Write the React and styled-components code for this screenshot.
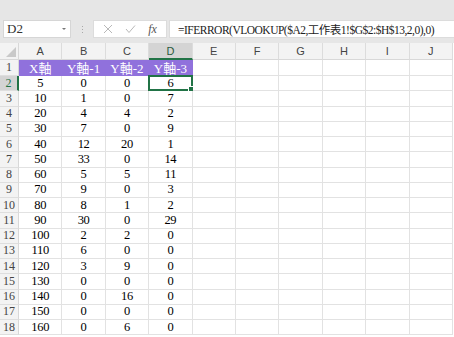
import React from "react";
import styled, { createGlobalStyle } from "styled-components";

const GlobalStyle = createGlobalStyle`
  html, body {
    margin: 0;
    padding: 0;
    background: #e6e6e6;
  }
`;

const Window = styled.div`
  width: 454px;
  height: 337px;
  overflow: hidden;
  background: #e6e6e6;
  display: flex;
  flex-direction: column;
`;

const TopStrip = styled.div`
  height: 20px;
  flex: none;
`;

const FormulaBar = styled.div`
  height: 18px;
  flex: none;
  display: flex;
  align-items: stretch;
  padding-left: 3px;
`;

const NameBox = styled.div`
  width: 68px;
  box-sizing: border-box;
  background: #fff;
  border: 1px solid #d6d6d6;
  display: flex;
  align-items: center;
  justify-content: space-between;
  padding: 0 4px 0 3px;
  font-family: "Liberation Serif", serif;
  font-size: 13px;
  color: #333;
`;

const Caret = styled.span`
  width: 0;
  height: 0;
  border-left: 2px solid transparent;
  border-right: 2px solid transparent;
  border-top: 2px solid #777;
`;

const Grip = styled.div`
  width: 22px;
  display: flex;
  flex-direction: column;
  align-items: center;
  justify-content: center;
  gap: 2px;
  span {
    width: 1px;
    height: 1px;
    background: #a8a8a8;
  }
`;

const FxGroup = styled.div`
  width: 74px;
  box-sizing: border-box;
  background: #fff;
  border: 1px solid #dcdcdc;
  display: flex;
  align-items: center;
  justify-content: space-around;
  padding: 0 3px;
`;

const FxLabel = styled.span`
  font-family: "Liberation Serif", serif;
  font-style: italic;
  font-size: 12px;
  color: #555;
`;

const FormulaInput = styled.div`
  flex: 1;
  margin-left: 2px;
  box-sizing: border-box;
  background: #fff;
  border: 1px solid #dcdcdc;
  border-right: none;
  display: flex;
  align-items: center;
  padding-left: 8px;
  white-space: nowrap;
  overflow: hidden;
  font-family: "Liberation Serif", "Noto Sans CJK TC", serif;
  font-size: 11.5px;
  letter-spacing: -0.5px;
  color: #222;
`;

const Sheet = styled.div`
  margin-top: 5px;
  flex: 1;
  display: grid;
  grid-template-columns: 19px repeat(10, 43.4px);
  grid-template-rows: 17px 16px repeat(17, 15.25px);
  background: #fff;
`;

const Corner = styled.div`
  background: #f3f3f3;
  border-right: 1px solid #d8d8d8;
  border-bottom: 1px solid #d8d8d8;
  box-sizing: border-box;
  position: relative;
  &::after {
    content: "";
    position: absolute;
    right: 2px;
    bottom: 2px;
    width: 0;
    height: 0;
    border-left: 10px solid transparent;
    border-bottom: 10px solid #c9c9c9;
  }
`;

const ColHead = styled.div`
  box-sizing: border-box;
  background: ${(p) => (p.$active ? "#d4d4d4" : "#f3f3f3")};
  border-right: 1px solid #dcdcdc;
  border-bottom: ${(p) => (p.$active ? "2px solid #217346" : "1px solid #d8d8d8")};
  display: flex;
  align-items: center;
  justify-content: center;
  font-family: "Liberation Sans", sans-serif;
  font-size: 11px;
  color: ${(p) => (p.$active ? "#2a5a3c" : "#444")};
`;

const RowHead = styled.div`
  box-sizing: border-box;
  background: ${(p) => (p.$active ? "#d4d4d4" : "#f3f3f3")};
  border-right: ${(p) => (p.$active ? "2px solid #217346" : "1px solid #d8d8d8")};
  border-bottom: 1px solid #dedede;
  display: flex;
  align-items: center;
  justify-content: center;
  font-family: "Liberation Serif", serif;
  font-size: 12px;
  color: ${(p) => (p.$active ? "#217346" : "#444")};
`;

const Cell = styled.div`
  box-sizing: border-box;
  position: relative;
  background: ${(p) => (p.$head ? "#9071dc" : "#fff")};
  border-right: 1px solid ${(p) => (p.$head ? "#9071dc" : "#e2e2e2")};
  border-bottom: 1px solid ${(p) => (p.$head ? "#9071dc" : "#e2e2e2")};
  display: flex;
  align-items: center;
  justify-content: center;
  font-family: "Liberation Serif", "Noto Sans CJK TC", serif;
  font-size: ${(p) => (p.$head ? "13px" : "12.5px")};
  letter-spacing: ${(p) => (p.$head ? "0" : "-0.3px")};
  color: ${(p) => (p.$head ? "#fff" : "#000")};
  white-space: nowrap;
`;

const Selection = styled.div`
  position: absolute;
  left: -1px;
  top: -1px;
  right: -1px;
  bottom: -1px;
  border: 2px solid #217346;
  pointer-events: none;
  &::after {
    content: "";
    position: absolute;
    right: -4px;
    bottom: -4px;
    width: 5px;
    height: 5px;
    background: #217346;
    border: 1px solid #fff;
  }
`;

const cols = ["A", "B", "C", "D", "E", "F", "G", "H", "I", "J"];
const heads = ["X軸", "Y軸-1", "Y軸-2", "Y軸-3"];
const data = [
  [5, 0, 0, 6],
  [10, 1, 0, 7],
  [20, 4, 4, 2],
  [30, 7, 0, 9],
  [40, 12, 20, 1],
  [50, 33, 0, 14],
  [60, 5, 5, 11],
  [70, 9, 0, 3],
  [80, 8, 1, 2],
  [90, 30, 0, 29],
  [100, 2, 2, 0],
  [110, 6, 0, 0],
  [120, 3, 9, 0],
  [130, 0, 0, 0],
  [140, 0, 16, 0],
  [150, 0, 0, 0],
  [160, 0, 6, 0],
];

const CrossIcon = () => (
  <svg width="10" height="10" viewBox="0 0 10 10">
    <path d="M1 1 L9 9 M9 1 L1 9" stroke="#b8b8b8" strokeWidth="1" fill="none" />
  </svg>
);

const CheckIcon = () => (
  <svg width="11" height="10" viewBox="0 0 11 10">
    <path d="M1 5 L4 8.5 L10 1.5" stroke="#b8b8b8" strokeWidth="1" fill="none" />
  </svg>
);

const App = () => {
  return (
    <Window>
      <GlobalStyle />
      <TopStrip />
      <FormulaBar>
        <NameBox>
          D2
          <Caret />
        </NameBox>
        <Grip>
          <span />
          <span />
          <span />
        </Grip>
        <FxGroup>
          <CrossIcon />
          <CheckIcon />
          <FxLabel>fx</FxLabel>
        </FxGroup>
        <FormulaInput>=IFERROR(VLOOKUP($A2,工作表1!$G$2:$H$13,2,0),0)</FormulaInput>
      </FormulaBar>
      <Sheet>
        <Corner />
        {cols.map((c) => (
          <ColHead key={c} $active={c === "D"}>
            {c}
          </ColHead>
        ))}
        <RowHead>1</RowHead>
        {cols.map((c, i) => (
          <Cell key={c} $head={i < 4}>
            {heads[i] || ""}
          </Cell>
        ))}
        {data.map((row, r) => (
          <React.Fragment key={r}>
            <RowHead $active={r === 0}>{r + 2}</RowHead>
            {cols.map((c, i) => (
              <Cell key={c}>
                {row[i] !== undefined ? row[i] : ""}
                {r === 0 && i === 3 && <Selection />}
              </Cell>
            ))}
          </React.Fragment>
        ))}
      </Sheet>
    </Window>
  );
};

export default App;
